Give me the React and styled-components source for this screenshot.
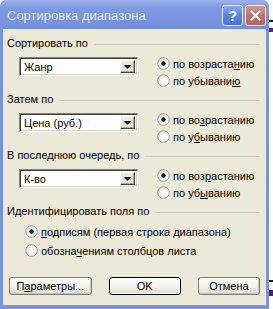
import React from "react";
import styled, { createGlobalStyle } from "styled-components";

const GlobalStyle = createGlobalStyle`
  html, body {
    margin: 0;
    padding: 0;
    background: #ffffff;
  }
  body {
    font-family: "Liberation Sans", Arial, sans-serif;
    font-size: 11px;
    color: #000;
  }
`;

const sections = [
  { title: "Сортировать по", value: "Жанр", up: ["по возраста", "н", "ию"], down: ["по убывани", "ю", ""] },
  { title: "Затем по", value: "Цена (руб.)", up: ["по во", "з", "растанию"], down: ["по у", "б", "ыванию"] },
  { title: "В последнюю очередь, по", value: "К-во", up: ["по воз", "р", "астанию"], down: ["по уб", "ы", "ванию"] },
];

const Hot = ({ parts }) => (
  <span>
    {parts[0]}
    <u>{parts[1]}</u>
    {parts[2]}
  </span>
);

const Radio = ({ checked }) => (
  <svg width="13" height="13" viewBox="0 0 13 13">
    <defs>
      <radialGradient id="rg" cx="0.65" cy="0.65" r="0.7">
        <stop offset="0" stopColor="#ffffff" />
        <stop offset="0.7" stopColor="#f4f3ef" />
        <stop offset="1" stopColor="#d8d6cc" />
      </radialGradient>
    </defs>
    <circle cx="6.5" cy="6.5" r="5.8" fill="url(#rg)" stroke="#9a9a9a" strokeWidth="1" />
    {checked && <circle cx="6.5" cy="6.5" r="2.2" fill="#111" />}
  </svg>
);

const App = () => {
  return (
    <>
      <GlobalStyle />
      <Page>
        <Window>
          <TitleBar>
            <Title>Сортировка диапазона</Title>
            <CapButton kind="help">?</CapButton>
            <CapButton kind="close">
              <svg width="11" height="11" viewBox="0 0 11 11">
                <path d="M1.5 1.5 L9.5 9.5 M9.5 1.5 L1.5 9.5" stroke="#fff" strokeWidth="2.2" strokeLinecap="round" />
              </svg>
            </CapButton>
          </TitleBar>
          <Body>
            {sections.map((s) => (
              <Section key={s.title}>
                <GroupHead>
                  <span>{s.title}</span>
                  <Line />
                </GroupHead>
                <SortRow>
                  <Combo>
                    <ComboText>{s.value}</ComboText>
                    <DropButton>
                      <svg width="7" height="4" viewBox="0 0 7 4">
                        <path d="M0 0 H7 L3.5 4 Z" fill="#000" />
                      </svg>
                    </DropButton>
                  </Combo>
                  <RadioCol>
                    <RadioRow>
                      <Radio checked />
                      <Hot parts={s.up} />
                    </RadioRow>
                    <RadioRow>
                      <Radio />
                      <Hot parts={s.down} />
                    </RadioRow>
                  </RadioCol>
                </SortRow>
              </Section>
            ))}
            <GroupHead>
              <span>Идентифицировать поля по</span>
              <Line />
            </GroupHead>
            <IdentCol>
              <RadioRow tall>
                <Radio checked />
                <Hot parts={["", "п", "одписям (первая строка диапазона)"]} />
              </RadioRow>
              <RadioRow tall>
                <Radio />
                <Hot parts={["обозна", "ч", "ениям столбцов листа"]} />
              </RadioRow>
            </IdentCol>
            <ButtonRow>
              <Button width={85}>
                <Hot parts={["П", "а", "раметры..."]} />
              </Button>
              <Button width={74} isDefault>OK</Button>
              <Button width={64}>Отмена</Button>
            </ButtonRow>
          </Body>
        </Window>
        <Backdrop>
          <Mark color="#111" top={20} h={2} />
          <Mark color="#5a1a8a" top={28} h={4} />
          <Mark color="#111" top={280} h={2} />
          <Mark color="#5a1a8a" top={290} h={6} />
        </Backdrop>
      </Page>
    </>
  );
};

const Page = styled.div`
  display: flex;
  width: 273px;
  height: 309px;
`;

const Window = styled.div`
  width: 269px;
  height: 309px;
  display: flex;
  flex-direction: column;
  background: #7592dc;
  border-radius: 7px 7px 0 0;
  box-sizing: border-box;
  overflow: hidden;
`;

const TitleBar = styled.div`
  height: 29px;
  flex: none;
  display: flex;
  align-items: center;
  padding: 0 3px 0 7px;
  box-sizing: border-box;
  background: linear-gradient(180deg, #9db2ec 0%, #7f99e2 25%, #7893df 70%, #7590dd 100%);
`;

const Title = styled.div`
  flex: 1;
  color: #dfe8fb;
  font-size: 13px;
  font-family: "Liberation Sans", Arial, sans-serif;
  padding-top: 1px;
`;

const CapButton = styled.div`
  width: 19px;
  height: 19px;
  margin-left: 2px;
  margin-top: 1px;
  border: 1px solid #e9eefb;
  border-radius: 3px;
  display: flex;
  align-items: center;
  justify-content: center;
  color: #fff;
  font-weight: bold;
  font-size: 15px;
  background: ${(p) =>
    p.kind === "close"
      ? "linear-gradient(180deg, #d99590 0%, #c4716b 50%, #b6625d 100%)"
      : "linear-gradient(180deg, #8aa8f0 0%, #5b83e6 50%, #4a73de 100%)"};
`;

const Body = styled.div`
  flex: 1;
  margin: 0 3px 4px 3px;
  background: #ece9d8;
  padding: 8px 6px 0 4px;
  display: flex;
  flex-direction: column;
`;

const Section = styled.div`
  display: flex;
  flex-direction: column;
  margin-bottom: 4px;
`;

const GroupHead = styled.div`
  height: 13px;
  line-height: 13px;
  display: flex;
  align-items: center;
  white-space: nowrap;
`;

const Line = styled.div`
  flex: 1;
  height: 1px;
  margin-left: 6px;
  margin-top: 2px;
  background: #d0d0bf;
`;

const SortRow = styled.div`
  display: flex;
  align-items: flex-start;
  margin-top: 7px;
  padding-left: 12px;
  height: 32px;
`;

const Combo = styled.div`
  width: 119px;
  height: 19px;
  box-sizing: border-box;
  display: flex;
  align-items: center;
  background: #fff;
  border-top: 1px solid #808080;
  border-left: 1px solid #808080;
  border-right: 1px solid #ffffff;
  border-bottom: 1px solid #ffffff;
  box-shadow: inset 1px 1px 0 #404040, inset -1px -1px 0 #d4d0c8;
  padding: 2px;
`;

const ComboText = styled.div`
  flex: 1;
  font-size: 11px;
  padding-left: 2px;
  white-space: nowrap;
`;

const DropButton = styled.div`
  width: 15px;
  height: 13px;
  box-sizing: border-box;
  display: flex;
  align-items: center;
  justify-content: center;
  background: #ece9d8;
  border-top: 1px solid #ffffff;
  border-left: 1px solid #ffffff;
  border-right: 1px solid #404040;
  border-bottom: 1px solid #404040;
  box-shadow: inset -1px -1px 0 #aca899;
`;

const RadioCol = styled.div`
  display: flex;
  flex-direction: column;
  margin-left: 19px;
  margin-top: -2px;
`;

const RadioRow = styled.div`
  display: flex;
  align-items: center;
  height: ${(p) => (p.tall ? "19px" : "17px")};
  gap: 3px;
  white-space: nowrap;
  svg {
    flex: none;
  }
`;

const IdentCol = styled.div`
  display: flex;
  flex-direction: column;
  margin-top: 4px;
  padding-left: 18px;
`;

const ButtonRow = styled.div`
  display: flex;
  margin-top: 17px;
  padding-left: 2px;
  gap: 17px;
`;

const Button = styled.div`
  width: ${(p) => p.width}px;
  height: 18px;
  box-sizing: border-box;
  display: flex;
  align-items: center;
  justify-content: center;
  font-size: 11px;
  border-radius: 3px;
  border: 1px solid ${(p) => (p.isDefault ? "#000" : "#7a7a7a")};
  background: linear-gradient(180deg, #fbfbf8 0%, #f2f1ea 60%, #dedbcd 100%);
  box-shadow: ${(p) => (p.isDefault ? "inset 0 0 0 1px #ffffff" : "inset -1px -1px 0 #c9c6b8")};
`;

const Backdrop = styled.div`
  flex: 1;
  position: relative;
  background: #ffffff;
`;

const Mark = styled.div`
  position: absolute;
  left: 0;
  right: 0;
  top: ${(p) => p.top}px;
  height: ${(p) => p.h}px;
  background: ${(p) => p.color};
`;

export default App;
